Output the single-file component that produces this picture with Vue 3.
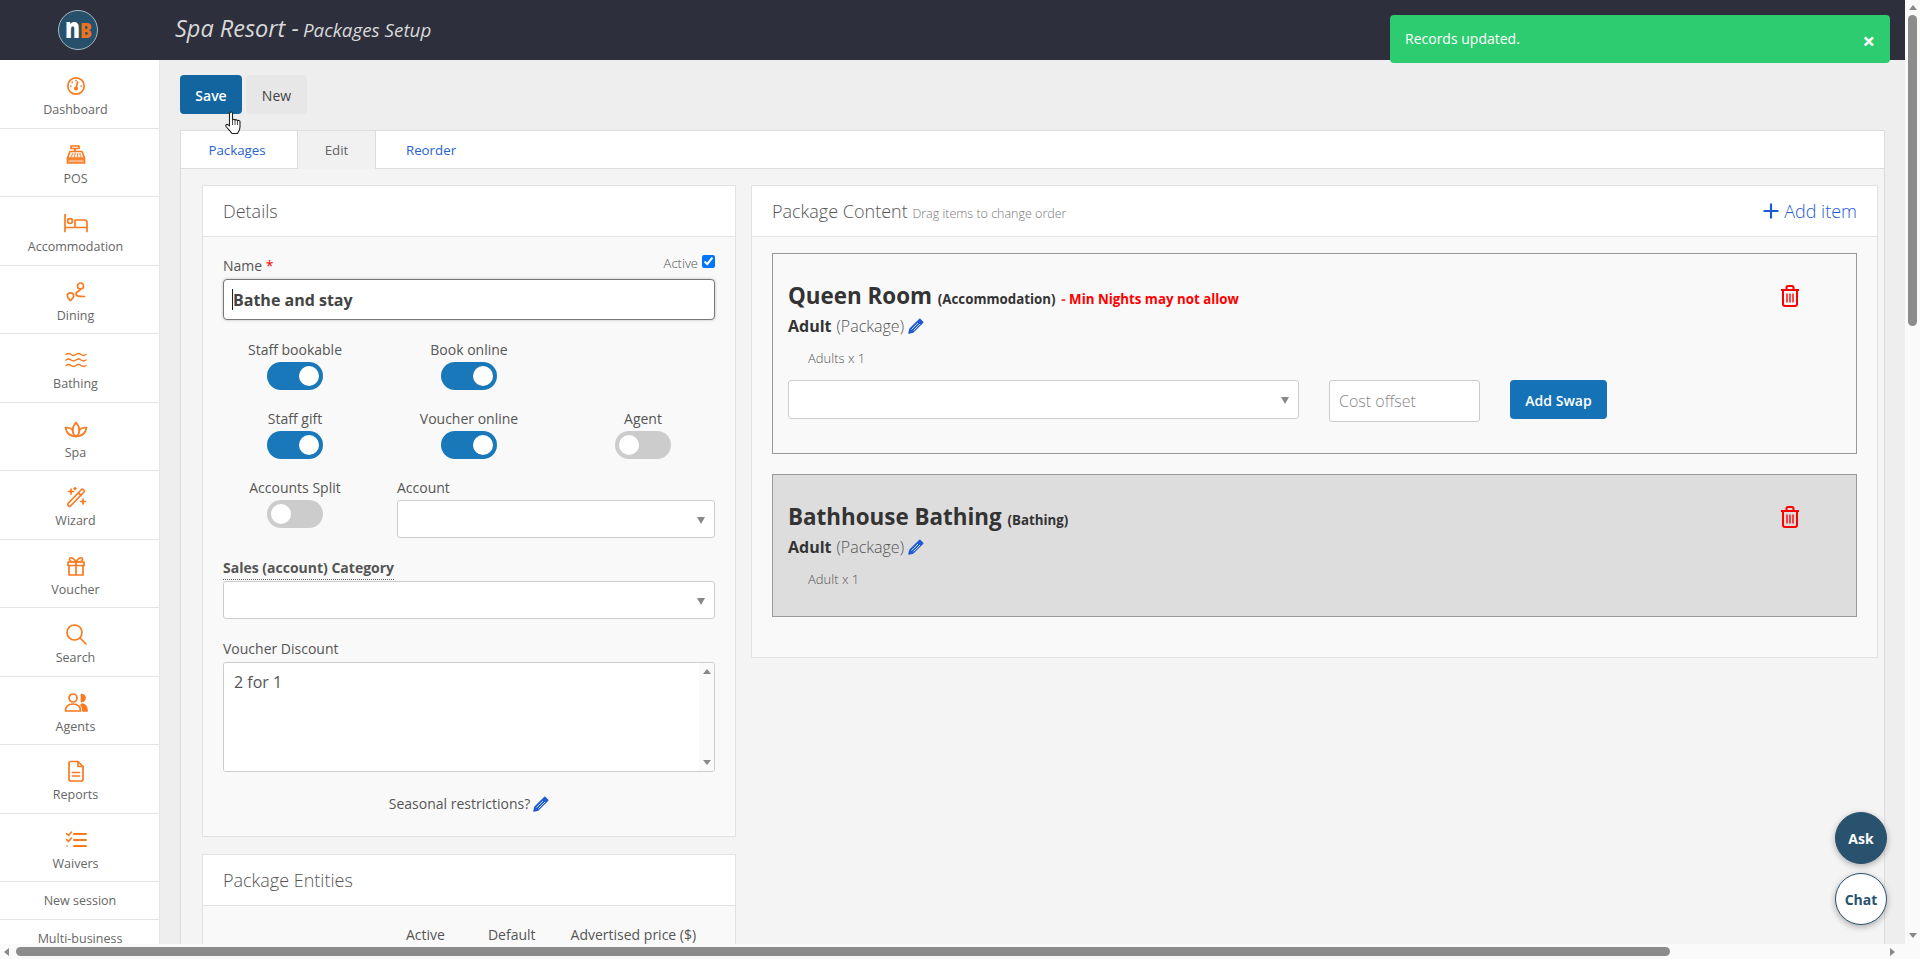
<script setup>
const navItems = [
  { label: 'Dashboard', icon: 'gauge' },
  { label: 'POS', icon: 'register' },
  { label: 'Accommodation', icon: 'bed' },
  { label: 'Dining', icon: 'route' },
  { label: 'Bathing', icon: 'waves' },
  { label: 'Spa', icon: 'lotus' },
  { label: 'Wizard', icon: 'wand' },
  { label: 'Voucher', icon: 'gift' },
  { label: 'Search', icon: 'search' },
  { label: 'Agents', icon: 'users' },
  { label: 'Reports', icon: 'file' },
  { label: 'Waivers', icon: 'list' },
]

const toggleRows = [
  [
    { label: 'Staff bookable', on: true },
    { label: 'Book online', on: true },
  ],
  [
    { label: 'Staff gift', on: true },
    { label: 'Voucher online', on: true },
    { label: 'Agent', on: false },
  ],
]
</script>

<template>
  <div class="page">
    <div class="view">
      <div class="content">
        <header class="topbar">
          <div class="logo">
            <svg width="42" height="42" viewBox="0 0 42 42">
              <circle cx="21" cy="21" r="19.5" fill="#27506b" stroke="#a9b8c2" stroke-width="1" />
              <text x="8" y="29" class="logo-n" textLength="15" lengthAdjust="spacingAndGlyphs">n</text>
              <text x="23" y="29" class="logo-b" textLength="12" lengthAdjust="spacingAndGlyphs">B</text>
            </svg>
          </div>
          <div class="page-title">Spa Resort <span class="dash">-</span> <small>Packages Setup</small></div>
        </header>

        <div class="below">
          <nav class="sidebar">
            <a v-for="item in navItems" :key="item.label" class="nav-item">
              <svg class="nav-icon" width="24" height="24" viewBox="0 0 24 24" fill="none" stroke="currentColor" stroke-width="1.7" stroke-linecap="round" stroke-linejoin="round">
                <template v-if="item.icon === 'gauge'">
                  <circle cx="12" cy="12" r="8.2" />
                  <path d="M12 14.5 13.6 8" />
                  <circle cx="12" cy="14.5" r="1.2" fill="currentColor" />
                  <path d="M12 6.6v.1M8.2 8.2v.1M6.8 12v.1M17.2 12v.1" />
                </template>
                <template v-else-if="item.icon === 'register'">
                  <path d="M7 3h8v2.500H7zM11 5.500V8.500" />
                  <path d="M6 8.500h12l2.500 6.500h-17z" />
                  <path d="M8.500 11h.1M11 11h.1M13.500 11h.1M16 11h.1M7.500 13h.1M10.400 13h.1M13.500 13h.1M16.500 13h.1" />
                  <path d="M3.500 16h17v4h-17z" fill="currentColor" fill-opacity=".55" />
                </template>
                <template v-else-if="item.icon === 'bed'">
                  <path d="M1 3.500v17M1 16.500h22M23 20.500v-9a2.500 2.500 0 0 0-2.500-2.500H11v7.500" />
                  <circle cx="6" cy="10" r="2.400" />
                </template>
                <template v-else-if="item.icon === 'route'">
                  <circle cx="16.500" cy="6" r="3" />
                  <path d="M16.500 9c0 2.500-4.500 1.800-4.500 4.800 0 2.700 3 2.700 8.500 2.700" />
                  <path d="M6.500 20.500c-1.500-1.500-3.200-2.800-3.200-4.500a3.200 3.200 0 0 1 6.400 0c0 1.700-1.700 3-3.200 4.500z" />
                </template>
                <template v-else-if="item.icon === 'waves'">
                  <path d="M2 6.500c1.700-1.300 3.300-1.300 5 0s3.300 1.300 5 0 3.300-1.300 5 0 3.300 1.300 5 0" stroke-width="1.500" />
                  <path d="M2 12c1.700-1.300 3.300-1.300 5 0s3.300 1.300 5 0 3.300-1.300 5 0 3.300 1.300 5 0" stroke-width="1.500" />
                  <path d="M2 17.500c1.700-1.300 3.300-1.300 5 0s3.300 1.300 5 0 3.300-1.300 5 0 3.300 1.300 5 0" stroke-width="1.500" />
                </template>
                <template v-else-if="item.icon === 'lotus'">
                  <path d="M12 19.500c-5.500 0-9.500-2.500-10.500-9 3.500 0 6 1 7.500 3" />
                  <path d="M12 19.500c5.500 0 9.500-2.500 10.500-9-3.500 0-6 1-7.500 3" />
                  <path d="M12 19.500c-4-2.500-5-8 0-14 5 6 4 11.500 0 14z" />
                </template>
                <template v-else-if="item.icon === 'wand'">
                  <path d="M4 18.500 17.500 4.500c1-1 3.500 1 2.500 2.500L6.500 21c-1.500 1-3.500-1-2.500-2.500z" />
                  <path d="M14.500 8l2.500 2.500" />
                  <path d="M7 4v5M4.500 6.500h5M11 2.500v2M10 3.500h2M19 14v5M16.500 16.500h5" />
                </template>
                <template v-else-if="item.icon === 'gift'">
                  <path d="M4 8h16v3.500H4zM5 11.500h14V21H5zM12 8v13" />
                  <path d="M12 8c-2-4-6-5.500-6.500-3s3 3 6.500 3c3.500 0 7-.5 6.500-3S14 4 12 8z" />
                </template>
                <template v-else-if="item.icon === 'search'">
                  <circle cx="10.500" cy="10.500" r="7.500" />
                  <path d="m16 16 6 6" />
                </template>
                <template v-else-if="item.icon === 'users'">
                  <circle cx="9" cy="7" r="4" />
                  <path d="M1.500 20c0-4.500 3-7 7.500-7s7.500 2.500 7.500 7z" />
                  <path d="M17.500 3.500a3.500 3.500 0 0 1 0 7z" fill="currentColor" />
                  <path d="M18 13c3 .3 5 2.800 5 7h-4c0-2.500-.5-4.500-2-6z" fill="currentColor" />
                </template>
                <template v-else-if="item.icon === 'file'">
                  <path d="M5 4.500A2 2 0 0 1 7 2.500h7l5 5V20a2 2 0 0 1-2 2H7a2 2 0 0 1-2-2z" />
                  <path d="M14 2.500v5h5M8.500 13.500h7M8.500 17h7" />
                </template>
                <template v-else>
                  <path d="M10 6h12M10 12h12M10 18h12" stroke-width="2" />
                  <path d="m2.500 5.500 2 2 3-3.500M2.500 11.500l2 2 3-3.500M3 18h.1" stroke-width="1.600" />
                </template>
              </svg>
              <span>{{ item.label }}</span>
            </a>
            <a class="nav-text">New session</a>
            <a class="nav-text">Multi-business</a>
          </nav>

          <main class="main">
            <div class="actions">
              <button class="btn btn-save">Save</button>
              <button class="btn btn-new">New</button>
            </div>

            <div class="tabs-card">
              <div class="tabs">
                <a class="tab tab-packages">Packages</a>
                <a class="tab tab-edit">Edit</a>
                <a class="tab tab-reorder">Reorder</a>
              </div>

              <div class="tab-body">
                <div class="col-left">
                  <section class="panel">
                    <div class="panel-head">Details</div>
                    <div class="panel-body details">
                      <div class="name-row">
                        <label>Name <span class="req">*</span></label>
                        <label class="active-check">Active <input type="checkbox" checked /></label>
                      </div>
                      <div class="name-input">
                        <input type="text" value="Bathe and stay" />
                        <span class="caret"></span>
                      </div>

                      <div class="toggle-grid">
                        <template v-for="(row, i) in toggleRows" :key="i">
                          <div v-for="t in row" :key="t.label" class="toggle-cell">
                            <label>{{ t.label }}</label>
                            <span class="toggle" :class="{ on: t.on }"></span>
                          </div>
                          <div v-if="row.length < 3" class="toggle-cell"></div>
                        </template>
                        <div class="toggle-cell">
                          <label>Accounts Split</label>
                          <span class="toggle"></span>
                        </div>
                        <div class="account-cell">
                          <label>Account</label>
                          <div class="select"></div>
                        </div>
                      </div>

                      <label class="sales-label">Sales (account) Category</label>
                      <div class="select"></div>

                      <label class="discount-label">Voucher Discount</label>
                      <div class="textarea-wrap">
                        <textarea readonly>2 for 1</textarea>
                        <div class="ta-scroll">
                          <i class="tri-up"></i>
                          <i class="tri-down"></i>
                        </div>
                      </div>

                      <div class="seasonal">
                        Seasonal restrictions?
                        <svg class="pencil" width="16" height="16" viewBox="0 0 16 16">
                          <path d="M11.800 1.200 14.800 4.200 5 14 1 15 2 11z" fill="#1f5bd0" stroke="#1f5bd0" stroke-width="1.500" stroke-linejoin="round" />
                          <path d="M3.500 11.500 10 5M5.500 12.500 12 6" stroke="#cfdcf7" stroke-width="1" />
                        </svg>
                      </div>
                    </div>
                  </section>

                  <section class="panel entities">
                    <div class="panel-head">Package Entities</div>
                    <div class="panel-body entity-cols">
                      <span class="ent-active">Active</span>
                      <span class="ent-default">Default</span>
                      <span class="ent-price">Advertised price ($)</span>
                    </div>
                  </section>
                </div>

                <section class="panel content-panel">
                  <div class="panel-head content-head">
                    <div>Package Content <small>Drag items to change order</small></div>
                    <a class="add-item">
                      <svg width="16" height="16" viewBox="0 0 16 16"><path d="M8 .5v15M.5 8h15" stroke="#1f5bd0" stroke-width="2.200" /></svg>
                      Add item
                    </a>
                  </div>
                  <div class="panel-body items">
                    <div class="item item-room">
                      <div class="item-head">
                        <div>
                          <div class="item-title">Queen Room <small>(Accommodation)</small> <small class="warn"><span class="warn-dash">-</span> Min Nights may not allow</small></div>
                          <div class="item-rate">
                            <b>Adult</b> (Package)
                            <svg class="pencil" width="16" height="16" viewBox="0 0 16 16">
                              <path d="M11.800 1.200 14.800 4.200 5 14 1 15 2 11z" fill="#1f5bd0" stroke="#1f5bd0" stroke-width="1.500" stroke-linejoin="round" />
                              <path d="M3.500 11.500 10 5M5.500 12.500 12 6" stroke="#cfdcf7" stroke-width="1" />
                            </svg>
                          </div>
                          <div class="item-qty">Adults x 1</div>
                        </div>
                        <svg class="trash" width="20" height="22" viewBox="0 0 20 22" fill="none" stroke="#f00" stroke-width="2">
                          <path d="M1 5h18M6.500 4.500V2.500a1.500 1.500 0 0 1 1.500-1.500h4a1.500 1.500 0 0 1 1.500 1.500v2" />
                          <path d="M3 5v14a2 2 0 0 0 2 2h10a2 2 0 0 0 2-2V5" />
                          <path d="M7 8.500v9M10 8.500v9M13 8.500v9" stroke-width="1.400" />
                        </svg>
                      </div>
                      <div class="swap-row">
                        <div class="select swap-select"></div>
                        <input class="cost" type="text" placeholder="Cost offset" />
                        <button class="btn btn-swap">Add Swap</button>
                      </div>
                    </div>

                    <div class="item item-bath">
                      <div class="item-head">
                        <div>
                          <div class="item-title">Bathhouse Bathing <small>(Bathing)</small></div>
                          <div class="item-rate">
                            <b>Adult</b> (Package)
                            <svg class="pencil" width="16" height="16" viewBox="0 0 16 16">
                              <path d="M11.800 1.200 14.800 4.200 5 14 1 15 2 11z" fill="#1f5bd0" stroke="#1f5bd0" stroke-width="1.500" stroke-linejoin="round" />
                              <path d="M3.500 11.500 10 5M5.500 12.500 12 6" stroke="#cfdcf7" stroke-width="1" />
                            </svg>
                          </div>
                          <div class="item-qty">Adult x 1</div>
                        </div>
                        <svg class="trash" width="20" height="22" viewBox="0 0 20 22" fill="none" stroke="#f00" stroke-width="2">
                          <path d="M1 5h18M6.500 4.500V2.500a1.500 1.500 0 0 1 1.500-1.500h4a1.500 1.500 0 0 1 1.500 1.500v2" />
                          <path d="M3 5v14a2 2 0 0 0 2 2h10a2 2 0 0 0 2-2V5" />
                          <path d="M7 8.500v9M10 8.500v9M13 8.500v9" stroke-width="1.400" />
                        </svg>
                      </div>
                    </div>
                  </div>
                </section>
              </div>
            </div>
          </main>
        </div>

        <div class="toast">
          <span>Records updated.</span>
          <span class="toast-x">×</span>
        </div>

        <button class="fab fab-ask">Ask</button>
        <button class="fab fab-chat">Chat</button>

        <svg class="hand" width="20" height="24" viewBox="0 0 20 24">
          <path d="M6 1.500c1-1 2.500-.6 2.500 1V9c.3-1 2.300-1 2.500.3.400-1 2.300-.8 2.500.5.500-.8 2.300-.5 2.500.9V16c0 3-1.500 5-2.500 6.500H8c-1.500-2-3.500-4-6-7-.8-1.200.5-2.800 2-1.800l1.500 1.300V3c0-.6.200-1.100.5-1.500z" fill="#fff" stroke="#222" stroke-width="1.100" stroke-linejoin="round" />
          <path d="M8.500 9v5M11 9.500v4.500M13.500 10v4" stroke="#222" stroke-width=".8" fill="none" />
        </svg>
      </div>

      <div class="vbar">
        <i class="tri-up"></i>
        <div class="vthumb"></div>
        <i class="tri-down"></i>
      </div>
    </div>

    <div class="hbar">
      <i class="tri-left"></i>
      <div class="hthumb"></div>
      <i class="tri-right"></i>
    </div>
  </div>
</template>

<style>
html, body {
  margin: 0;
  overflow: hidden;
}
</style>

<style scoped>
.page {
  width: 1920px;
  height: 959px;
  display: flex;
  flex-direction: column;
  font-family: "Open Sans", sans-serif;
  font-size: 14px;
  color: #555;
  background: #fff;
  overflow: hidden;
}

.view {
  flex: 1;
  min-height: 0;
  display: flex;
}

.content {
  position: relative;
  width: 1905px;
  display: flex;
  flex-direction: column;
  overflow: hidden;
}

/* top bar */
.topbar {
  height: 60px;
  flex: none;
  background: #2d2f3c;
  display: flex;
  align-items: center;
}

.logo {
  width: 175px;
  flex: none;
  display: flex;
  justify-content: center;
  padding-right: 19px;
  box-sizing: border-box;
}

.logo svg {
  display: block;
}

.logo-n {
  font: 800 28px "Open Sans", sans-serif;
  fill: #fff;
}

.logo-b {
  font: 800 21px "Open Sans", sans-serif;
  fill: #e9731f;
}

.page-title {
  font-size: 23.5px;
  font-style: italic;
  color: #d8d8d8;
  margin-top: -5px;
}

.page-title small {
  font-size: 18.8px;
  margin-left: -2px;
}

/* sidebar */
.below {
  flex: 1;
  min-height: 0;
  display: flex;
  background: #eee;
}

.sidebar {
  width: 159px;
  flex: none;
  background: #fff;
  border-right: 1px solid #e6e6e6;
  overflow: hidden;
}

.nav-item {
  height: 68.5px;
  box-sizing: border-box;
  border-bottom: 1.5px solid #e6e2e6;
  display: flex;
  flex-direction: column;
  align-items: center;
  padding: 14px 8px 0 0;
  font-size: 12.5px;
  color: #666;
  line-height: 18px;
}

.nav-icon {
  color: #f97a1f;
  flex: none;
  margin-bottom: 3px;
}

.nav-text {
  height: 38px;
  box-sizing: border-box;
  border-bottom: 1.5px solid #e6e2e6;
  display: flex;
  align-items: center;
  justify-content: center;
  padding-left: 1px;
  font-size: 12.5px;
  color: #666;
}

/* main */
.main {
  flex: 1;
  min-width: 0;
  padding: 15px 20px 0;
}

.actions {
  display: flex;
  gap: 4px;
  margin-bottom: 16px;
}

.btn {
  height: 39px;
  border: 0;
  border-radius: 4px;
  padding: 2px 0 0;
  font-family: inherit;
  font-size: 14px;
  font-weight: 600;
}

.btn-save {
  width: 62px;
  background: #13659f;
  color: #fff;
}

.btn-new {
  width: 61px;
  background: #e7e7e7;
  color: #444;
  font-weight: 400;
}

.tabs-card {
  border: 1px solid #ddd;
  border-bottom: 0;
  background: #f4f4f4;
}

.tabs {
  height: 37px;
  display: flex;
  background: #fff;
  border-bottom: 1px solid #ddd;
}

.tab {
  display: flex;
  align-items: center;
  justify-content: center;
  color: #2a62d0;
  font-size: 13.3px;
  box-sizing: border-box;
  height: 37px;
}

.tab-packages {
  width: 116px;
  padding-right: 4px;
}

.tab-edit {
  width: 79px;
  color: #666;
  height: 38px;
  padding-bottom: 1px;
  background: #f1f1f1;
  border-left: 1px solid #ddd;
  border-right: 1px solid #ddd;
}

.tab-reorder {
  width: 110px;
}

.tab-body {
  display: grid;
  grid-template-columns: 534px 1127px;
  gap: 15px;
  padding: 16px 6px 0 21px;
  align-items: start;
}

.col-left {
  display: flex;
  flex-direction: column;
  gap: 17px;
}

/* panels */
.panel {
  border: 1px solid #e2e2e2;
  background: #f9f9f9;
}

.panel-head {
  height: 50px;
  background: #fff;
  border-bottom: 1px solid #e2e2e2;
  display: flex;
  align-items: center;
  padding: 0 20px;
  font-size: 18px;
  font-weight: 300;
  color: #555;
}

.details {
  padding: 19px 20px 22px;
}

label {
  display: block;
  line-height: 20px;
}

.name-row {
  display: flex;
  justify-content: space-between;
  height: 23px;
}

.req {
  color: #f00;
}

.active-check {
  font-size: 13px;
  font-weight: 300;
  display: flex;
  align-items: flex-start;
  gap: 4px;
  margin-top: -3px;
}

.active-check input {
  width: 13px;
  height: 13px;
  margin: 2px 0 0;
}

.name-input {
  position: relative;
}

.name-input input {
  width: 100%;
  height: 41px;
  box-sizing: border-box;
  border: 1px solid #777;
  border-radius: 4px;
  box-shadow: 0 0 3px rgba(0, 0, 0, 0.25);
  padding: 0 9px;
  font-family: inherit;
  font-size: 16px;
  font-weight: 700;
  color: #444;
  outline: none;
}

.caret {
  position: absolute;
  left: 9px;
  top: 10px;
  width: 1px;
  height: 21px;
  background: #222;
}

.toggle-grid {
  display: grid;
  grid-template-columns: repeat(3, 174px);
  margin: 20px -15px 0;
  row-gap: 19px;
}

.toggle-cell {
  display: flex;
  flex-direction: column;
  align-items: center;
  height: 50px;
  gap: 2px;
}

.toggle {
  position: relative;
  display: block;
  width: 56px;
  height: 28px;
  border-radius: 14px;
  background: #ccc;
}

.toggle::after {
  content: "";
  position: absolute;
  top: 4px;
  left: 4px;
  width: 20px;
  height: 20px;
  border-radius: 50%;
  background: #fff;
}

.toggle.on {
  background: #1878ba;
}

.toggle.on::after {
  left: 32px;
}

.account-cell {
  grid-column: span 2;
  padding: 0 15px;
}

.account-cell label {
  margin-bottom: 2px;
}

.select {
  position: relative;
  height: 38px;
  box-sizing: border-box;
  border: 1px solid #ccc;
  border-radius: 3px;
  background: #fff;
}

.select::after {
  content: "";
  position: absolute;
  right: 9px;
  top: 16px;
  border-left: 4px solid transparent;
  border-right: 4px solid transparent;
  border-top: 7px solid #888;
}

.sales-label {
  display: table;
  margin: 19px 0 1px;
  font-weight: 700;
  font-size: 14px;
  border-bottom: 1px dotted #666;
  line-height: 21px;
  padding-bottom: 1px;
}

.discount-label {
  margin: 20px 0 3px;
}

.textarea-wrap {
  display: flex;
  height: 110px;
  box-sizing: border-box;
  border: 1px solid #ccc;
  border-radius: 3px;
  background: #fff;
  overflow: hidden;
}

.textarea-wrap textarea {
  flex: 1;
  border: 0;
  resize: none;
  outline: none;
  overflow: hidden;
  padding: 8px 10px;
  font-family: inherit;
  font-size: 16px;
  line-height: 22px;
  color: #555;
}

.ta-scroll {
  width: 15px;
  background: #fafafa;
  display: flex;
  flex-direction: column;
  justify-content: space-between;
  align-items: center;
  padding: 6px 0;
}

.seasonal {
  margin-top: 22px;
  line-height: 20px;
  display: flex;
  justify-content: center;
  align-items: center;
  gap: 3px;
}

.pencil {
  flex: none;
}

.entity-cols {
  display: flex;
  padding: 19px 0 0 203px;
  height: 60px;
}

.ent-default {
  margin-left: 43px;
}

.ent-price {
  margin-left: 35px;
}

/* package content */
.content-head {
  justify-content: space-between;
}

.content-head small {
  font-size: 12.5px;
  color: #777;
}

.add-item {
  display: flex;
  align-items: center;
  gap: 5px;
  color: #1f5bd0;
  font-size: 18px;
}

.items {
  padding: 16px 20px 40px;
}

.item {
  border: 1px solid #999;
  padding: 25px 12px 0 15px;
}

.item-room {
  height: 201px;
  box-sizing: border-box;
}

.item-bath {
  height: 143px;
  box-sizing: border-box;
  margin-top: 20px;
  background: #ddd;
}

.item-head {
  display: flex;
  justify-content: space-between;
  align-items: flex-start;
}

.item-title {
  height: 32px;
  font-size: 22.4px;
  font-weight: 700;
  color: #333;
  line-height: 34px;
}

.item-title small {
  font-size: 13.3px;
  font-weight: 700;
}

.warn {
  color: #f00;
}

.warn-dash {
  color: #e33;
}

.item-rate {
  margin-top: 5px;
  font-size: 16px;
  font-weight: 300;
  line-height: 20px;
  display: flex;
  align-items: center;
  gap: 4px;
}

.item-rate b {
  font-weight: 700;
  color: #333;
  margin-right: 1px;
}

.item-qty {
  margin-top: 12px;
  padding-left: 20px;
  font-size: 13px;
  font-weight: 300;
  line-height: 20px;
  color: #555;
}

.trash {
  margin: 6px 44px 0 0;
}

.swap-row {
  display: flex;
  align-items: flex-start;
  margin-top: 12px;
}

.swap-select {
  width: 511px;
  height: 39px;
}

.cost {
  width: 151px;
  height: 42px;
  box-sizing: border-box;
  margin-left: 30px;
  border: 1px solid #ccc;
  border-radius: 3px;
  padding: 0 9px;
  font-family: inherit;
  font-size: 16px;
  font-weight: 300;
  outline: none;
}

.cost::placeholder {
  color: #888;
}

.btn-swap {
  width: 97px;
  margin-left: 30px;
  background: #1572b6;
  color: #fff;
}

/* overlays */
.toast {
  position: absolute;
  left: 1390px;
  top: 15px;
  width: 500px;
  height: 48px;
  box-sizing: border-box;
  padding: 0 15px 2px;
  display: flex;
  align-items: center;
  justify-content: space-between;
  background: #2ecc71;
  border-radius: 4px;
  color: #fff;
  font-size: 14px;
}

.toast-x {
  font-size: 22px;
  font-weight: 700;
  padding: 3px 0 0;
}

.fab {
  position: absolute;
  left: 1835px;
  width: 52px;
  height: 52px;
  border-radius: 50%;
  border: 1px solid #29526e;
  font-family: inherit;
  font-size: 14px;
  font-weight: 700;
  box-shadow: 0 2px 6px rgba(0, 0, 0, 0.3);
}

.fab-ask {
  top: 812px;
  background: #29526e;
  color: #fff;
}

.fab-chat {
  top: 873px;
  background: #fff;
  color: #29526e;
}

.hand {
  position: absolute;
  left: 224px;
  top: 111px;
}

/* page scrollbars */
.vbar {
  width: 15px;
  flex: none;
  background: #fafafa;
  display: flex;
  flex-direction: column;
  align-items: center;
  padding-top: 5px;
  box-sizing: border-box;
}

.vthumb {
  width: 9px;
  height: 311px;
  margin-top: 5px;
  border-radius: 5px;
  background: #8c8c8c;
}

.vbar .tri-down {
  margin-top: auto;
  margin-bottom: 6px;
}

.hbar {
  height: 15px;
  flex: none;
  background: #fafafa;
  display: flex;
  align-items: center;
  padding-left: 4px;
}

.hthumb {
  width: 1654px;
  height: 9px;
  margin-left: 7px;
  border-radius: 5px;
  background: #8c8c8c;
}

.hbar .tri-right {
  margin-left: 220px;
}

i {
  display: block;
  width: 0;
  height: 0;
  flex: none;
}

.tri-up {
  border-left: 4.5px solid transparent;
  border-right: 4.5px solid transparent;
  border-bottom: 5px solid #888;
}

.tri-down {
  border-left: 4.5px solid transparent;
  border-right: 4.5px solid transparent;
  border-top: 5px solid #888;
}

.tri-left {
  border-top: 4.5px solid transparent;
  border-bottom: 4.5px solid transparent;
  border-right: 5px solid #888;
}

.tri-right {
  border-top: 4.5px solid transparent;
  border-bottom: 4.5px solid transparent;
  border-left: 5px solid #888;
}
</style>
